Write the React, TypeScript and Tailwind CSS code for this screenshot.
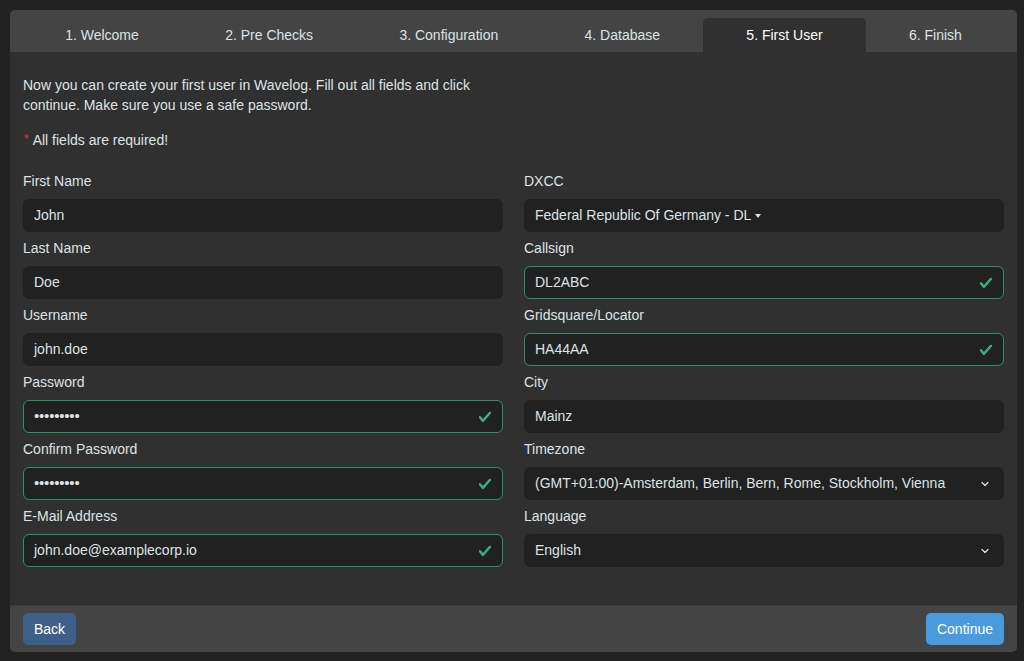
import React from "react";

type Field = {
  label: string;
  value: string;
  valid?: boolean;
  kind?: "text" | "password" | "select" | "picker";
};

const steps = ["1. Welcome", "2. Pre Checks", "3. Configuration", "4. Database", "5. First User", "6. Finish"];
const active = 4;

const left: Field[] = [
  { label: "First Name", value: "John" },
  { label: "Last Name", value: "Doe" },
  { label: "Username", value: "john.doe" },
  { label: "Password", value: "•••••••••", valid: true, kind: "password" },
  { label: "Confirm Password", value: "•••••••••", valid: true, kind: "password" },
  { label: "E-Mail Address", value: "john.doe@examplecorp.io", valid: true },
];

const right: Field[] = [
  { label: "DXCC", value: "Federal Republic Of Germany - DL", kind: "picker" },
  { label: "Callsign", value: "DL2ABC", valid: true },
  { label: "Gridsquare/Locator", value: "HA44AA", valid: true },
  { label: "City", value: "Mainz" },
  { label: "Timezone", value: "(GMT+01:00)-Amsterdam, Berlin, Bern, Rome, Stockholm, Vienna", kind: "select" },
  { label: "Language", value: "English", kind: "select" },
];

function Check() {
  return (
    <svg width="14" height="14" viewBox="0 0 8 8" className="shrink-0 mr-[-6px]">
      <path
        fill="#3daf7e"
        d="M2.3 6.73.6 4.53c-.4-1.04.46-1.4 1.1-.8l1.1 1.4 3.4-3.8c.6-.63 1.6-.27 1.2.7l-4 4.6c-.43.5-.8.4-1.1.1z"
      />
    </svg>
  );
}

function Chevron() {
  return (
    <svg width="10" height="8" viewBox="0 0 16 16" className="shrink-0 mr-[-3px]">
      <path fill="none" stroke="#dee2e6" strokeLinecap="round" strokeLinejoin="round" strokeWidth="2.4" d="m2 5 6 6 6-6" />
    </svg>
  );
}

function FormField({ f }: { f: Field }) {
  return (
    <div className="mb-[6px]">
      <div className="h-[20px] leading-[20px] mb-[8px]">{f.label}</div>
      <div
        className={
          "h-[33px] rounded-[6px] bg-[#212121] border flex items-center justify-between pl-[10px] pr-[16px] " +
          (f.valid ? "border-[#2f8f66]" : "border-[#212121]")
        }
      >
        {f.kind === "picker" ? (
          <span className="flex items-center">
            {f.value}
            <span className="ml-[4px] w-0 h-0 border-x-[3.5px] border-x-transparent border-t-[4px] border-t-[#dee2e6]" />
          </span>
        ) : (
          <span className={f.kind === "password" ? "text-[15px] tracking-[-0.2px]" : ""}>{f.value}</span>
        )}
        {f.valid && <Check />}
        {f.kind === "select" && <Chevron />}
      </div>
    </div>
  );
}

export default function App() {
  return (
    <div
      className="min-h-screen bg-[#222222] pt-[10px] pl-[10px] text-[14px] text-[#dee2e6]"
      style={{ fontFamily: '"Liberation Sans", Arial, sans-serif' }}
    >
      <div className="w-[1007px] h-[642px] bg-[#303030] rounded-[5px] flex flex-col overflow-hidden">
        {/* step tabs */}
        <div className="h-[42px] bg-[#444444] px-[12px] flex items-end">
          {steps.map((s, i) => (
            <div
              key={s}
              className={
                "flex-auto h-[34px] px-4 flex items-center justify-center rounded-t-[5px] " +
                (i === active ? "bg-[#303030] text-white" : "")
              }
            >
              {s}
            </div>
          ))}
        </div>

        <div className="flex-1 px-[13px] pt-[23px]">
          <p className="w-[480px] leading-[20px]">
            Now you can create your first user in Wavelog. Fill out all fields and click continue. Make sure you use a
            safe password.
          </p>
          <p className="mt-[15px] leading-[20px] flex items-center">
            <span className="text-[#e0323f] text-[12px] leading-[12px] mr-[4px] ml-[1px] mb-[2px]">*</span>
            All fields are required!
          </p>

          <div className="mt-[21px] grid grid-cols-2 gap-x-[21px]">
            <div>
              {left.map((f) => (
                <FormField key={f.label} f={f} />
              ))}
            </div>
            <div>
              {right.map((f) => (
                <FormField key={f.label} f={f} />
              ))}
            </div>
          </div>
        </div>

        {/* footer */}
        <div className="h-[47px] bg-[#444444] border-t border-[#3a3a3a] px-[13px] flex items-center justify-between">
          <button className="h-[32px] px-[11px] rounded-[5px] bg-[#3e5f87] text-white">Back</button>
          <button className="h-[32px] px-[11px] rounded-[5px] bg-[#4a9ade] text-white">Continue</button>
        </div>
      </div>
    </div>
  );
}
